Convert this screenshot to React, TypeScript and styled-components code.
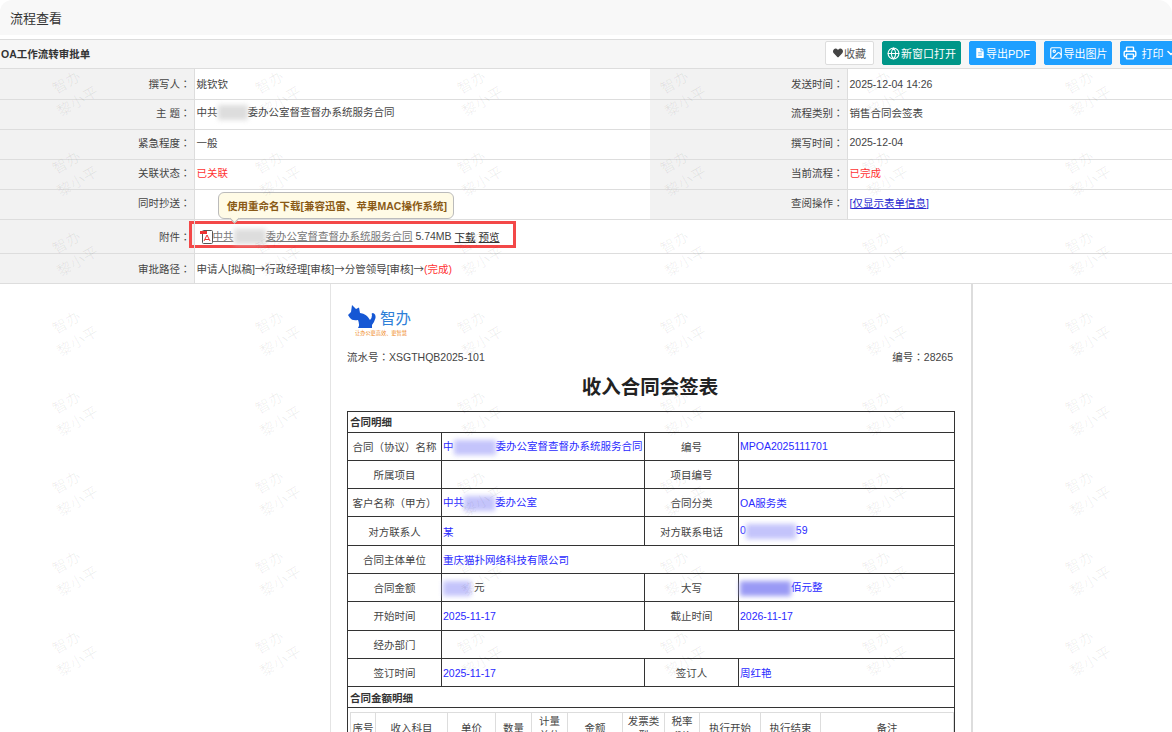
import React from "react";
import styled, { createGlobalStyle } from "styled-components";
import { FaHeart, FaFileAlt } from "react-icons/fa";
import { Globe, Image as ImageIcon, Printer, ChevronDown } from "lucide-react";

const Global = createGlobalStyle`
  html, body { margin: 0; padding: 0; background: #fff; }
  * { box-sizing: border-box; }
  body { font-family: "Liberation Sans", "Noto Sans CJK SC", sans-serif; font-size: 10.5px; color: #444; }
`;

const Frame = styled.div`
  position: relative;
  width: 1172px;
  height: 732px;
  overflow: hidden;
  background: #fff;
`;
const TitleBar = styled.header`
  height: 35px;
  padding-left: 10px;
  display: flex;
  align-items: center;
  background: #f8f8f8;
  border-radius: 12px 14px 0 0;
  font-size: 13px;
  color: #333;
`;
const FormHeader = styled.div`
  height: 30px;
  margin-top: 4px;
  padding: 0 0 2px 1px;
  border-top: 1px solid #dcdcdc;
  border-bottom: 1px solid #ddd;
  display: flex;
  align-items: center;
  background: #f6f6f6;
`;
const FormTitle = styled.h1`
  margin: 0;
  font-size: 10.5px;
  font-weight: 700;
  color: #333;
`;
const Toolbar = styled.div`
  margin-left: auto;
  margin-right: -8px;
  display: flex;
  gap: 8px;
  flex-shrink: 0;
`;
const Btn = styled.button<{ $bg: string; $w: number }>`
  width: ${(p) => p.$w}px;
  height: 24px;
  padding: 0;
  display: flex;
  align-items: center;
  justify-content: center;
  gap: 1px;
  border: 1px solid ${(p) => (p.$bg === "#fff" ? "#ddd" : p.$bg)};
  border-radius: 2px;
  background: ${(p) => p.$bg};
  color: ${(p) => (p.$bg === "#fff" ? "#555" : "#fff")};
  font-family: inherit;
  font-size: 11px;
`;
const InfoTable = styled.table`
  width: 1172px;
  table-layout: fixed;
  border-collapse: collapse;
`;
const InfoRow = styled.tr<{ $h?: number; $lift?: number }>`
  height: ${(p) => p.$h ?? 30}px;
  border-bottom: 1px solid #ddd;
  td {
    padding-bottom: ${(p) => p.$lift ?? 4}px;
  }
`;
const Label = styled.td`
  background: #f2f2f2;
  text-align: right;
  padding: 0 3px 0 0;
  border-right: 1px solid #ddd;
  color: #444;
`;
const Value = styled.td<{ $color?: string }>`
  padding: 0 0 0 2px;
  color: ${(p) => p.$color ?? "#444"};
`;
const Red = styled.span`
  color: #f33;
`;
const Punct = styled.span`
  font-family: "Noto Sans CJK TC", sans-serif;
`;
const Arrow = styled.span`
  font-family: "Noto Sans CJK SC", sans-serif;
`;
const Blur = styled.span<{ $w: number; $c: string }>`
  display: inline-block;
  width: ${(p) => p.$w}px;
  height: 15px;
  vertical-align: middle;
  background: ${(p) => p.$c};
  filter: blur(2.5px);
`;
const Attachment = styled.div`
  width: 327px;
  height: 27px;
  margin: -4px 0 0 -8px;
  padding: 4px 0 0 8px;
  border: 3px solid #f34848;
  display: flex;
  align-items: center;
  white-space: pre;
`;
const FileLink = styled.span`
  color: #777;
  text-decoration: underline;
`;
const ActionLink = styled.span`
  color: #333;
  text-decoration: underline;
  margin-left: 3px;
`;
const Tooltip = styled.div`
  position: absolute;
  left: 218px;
  top: 192px;
  width: 236px;
  height: 27px;
  display: flex;
  align-items: center;
  padding-left: 8px;
  background: #fffbe6;
  border: 1px solid #bbb;
  border-radius: 6px;
  color: #8a5a16;
  font-weight: 700;
  font-size: 10.5px;
  &::after {
    content: "";
    position: absolute;
    left: 12px;
    bottom: -4px;
    width: 6px;
    height: 6px;
    background: #fffbe6;
    border-right: 1px solid #bbb;
    border-bottom: 1px solid #bbb;
    transform: rotate(45deg);
  }
`;
const DocArea = styled.div`
  padding-left: 330px;
`;
const Paper = styled.section`
  width: 643px;
  height: 460px;
  padding: 21px 18px 0 16px;
  border-left: 1px solid #e4e4e4;
  border-right: 2px solid #ddd;
`;
const LogoWrap = styled.div`
  height: 32px;
  display: flex;
  gap: 3px;
`;
const LogoText = styled.div`
  display: flex;
  flex-direction: column;
  padding-top: 4px;
  color: #2f7fd8;
  font-size: 15.5px;
  line-height: 20px;
`;
const Tagline = styled.div`
  margin: 1px 0 0 -25px;
  width: 60px;
  color: #f08a1d;
  font-size: 5.2px;
  line-height: 7px;
  white-space: nowrap;
`;
const MetaRow = styled.div`
  display: flex;
  justify-content: space-between;
  margin-top: 12px;
  height: 16px;
  line-height: 16px;
  color: #444;
`;
const DocTitle = styled.h2`
  margin: 8px 0 0;
  height: 38px;
  text-align: center;
  font-size: 19.5px;
  line-height: 28px;
  font-weight: 700;
  color: #222;
`;
const DocTable = styled.table`
  width: 607px;
  table-layout: fixed;
  border-collapse: collapse;
  td { border: 1px solid #333; padding: 0; }
`;
const DocRow = styled.tr<{ $h?: number }>`
  height: ${(p) => p.$h ?? 28.3}px;
`;
const Section = styled.td`
  font-weight: 700;
  color: #333;
  padding-left: 2px !important;
`;
const DocLabel = styled.td`
  text-align: center;
  color: #444;
`;
const DocValue = styled.td`
  color: #2a2aff;
  padding-left: 1px !important;
  white-space: nowrap;
`;
const Plain = styled.span`
  color: #444;
`;
const Inner = styled.table`
  width: 603px;
  margin: 4px 0 0 2px;
  table-layout: fixed;
  border-collapse: collapse;
  th {
    border: 1px solid #ddd;
    padding: 0 3px;
    height: 30px;
    font-weight: 400;
    line-height: 14px;
    color: #444;
    font-size: 10.5px;
  }
  th:first-child {
    padding: 0;
  }
`;
const Overlay = styled.div`
  position: absolute;
  left: -29px;
  top: 52px;
  display: grid;
  grid-template-columns: repeat(6, 202.6px);
  grid-auto-rows: 80px;
  pointer-events: none;
`;
const Mark = styled.div`
  display: flex;
  flex-direction: column;
  align-items: center;
  justify-content: center;
  transform: rotate(-30deg);
  font-size: 14.5px;
  line-height: 22px;
  letter-spacing: 0.5px;
  color: rgba(0, 0, 0, 0.065);
`;

const Cat = () => (
  <svg width="30" height="25" viewBox="0 0 30 25">
    <path
      fill="#1557d4"
      d="M1 10 L4 7 L5 0 L9 4 L12 2.5 L13 8 Q20 9 23 15 Q25 13 25 10 Q24 8 26 8 Q29 9 28.5 13 Q27 18 25 20 L25 23 L11 23 Q13 20 11 15 Q5 16 3 13 Z"
    />
  </svg>
);

const PdfIcon = () => (
  <svg width="13" height="15" viewBox="0 0 13 15" style={{ flexShrink: 0 }}>
    <rect x="2.5" y="1.5" width="10" height="13" rx="1" fill="#fff" stroke="#555" />
    <path d="M0 2 H7 V5 H0 Z" fill="#e33" />
    <path d="M4 12 L7 6 L10 12 M5 10.5 H9" fill="none" stroke="#e33" strokeWidth="1" />
  </svg>
);

const heads: [string, number][] = [
  ["序号", 25], ["收入科目", 72], ["单价", 48], ["数量", 36], ["计量单位", 36], ["金额", 55],
  ["发票类型", 42], ["税率(%)", 35], ["执行开始", 61], ["执行结束", 60], ["备注", 133],
];

const blue = "#c4c4fb";
const Colon = () => <Punct>：</Punct>;

export default function App() {
  return (
    <Frame>
      <Global />
      <TitleBar>流程查看</TitleBar>
      <FormHeader>
        <FormTitle>OA工作流转审批单</FormTitle>
        <Toolbar>
          <Btn $bg="#fff" $w={49}><FaHeart size={10} color="#444" />收藏</Btn>
          <Btn $bg="#009688" $w={79}><Globe size={13} />新窗口打开</Btn>
          <Btn $bg="#1e9fff" $w={67}><FaFileAlt size={10} />导出PDF</Btn>
          <Btn $bg="#1e9fff" $w={68}><ImageIcon size={14} />导出图片</Btn>
          <Btn $bg="#1e9fff" $w={60}><Printer size={14} strokeWidth={2.4} />&nbsp;打印<ChevronDown size={12} strokeWidth={3} /></Btn>
        </Toolbar>
      </FormHeader>
      <InfoTable>
        <colgroup>
          <col width={194} />
          <col width={456} />
          <col width={197} />
          <col />
        </colgroup>
        <tbody>
          <InfoRow $lift={0}>
            <Label>撰写人<Colon /></Label><Value>姚钦钦</Value>
            <Label>发送时间<Colon /></Label><Value>2025-12-04 14:26</Value>
          </InfoRow>
          <InfoRow>
            <Label>主 题<Colon /></Label><Value>中共<Blur $w={30} $c="#ddd" />委办公室督查督办系统服务合同</Value>
            <Label>流程类别<Colon /></Label><Value>销售合同会签表</Value>
          </InfoRow>
          <InfoRow>
            <Label>紧急程度<Colon /></Label><Value>一般</Value>
            <Label>撰写时间<Colon /></Label><Value>2025-12-04</Value>
          </InfoRow>
          <InfoRow>
            <Label>关联状态<Colon /></Label><Value $color="#f33">已关联</Value>
            <Label>当前流程<Colon /></Label><Value $color="#f33">已完成</Value>
          </InfoRow>
          <InfoRow>
            <Label>同时抄送<Colon /></Label><Value />
            <Label>查阅操作<Colon /></Label><Value $color="#2a2ad0"><u>[仅显示表单信息]</u></Value>
          </InfoRow>
          <InfoRow $h={34} $lift={0}>
            <Label>附件<Colon /></Label>
            <Value colSpan={3}>
              <Attachment>
                <PdfIcon />
                <FileLink>中共<Blur $w={32} $c="#ddd" />委办公室督查督办系统服务合同</FileLink>
                {" 5.74MB"}
                <ActionLink>下载</ActionLink>
                <ActionLink>预览</ActionLink>
              </Attachment>
            </Value>
          </InfoRow>
          <InfoRow $lift={0}>
            <Label>审批路径<Colon /></Label>
            <Value colSpan={3}>申请人[拟稿]<Arrow>→</Arrow>行政经理[审核]<Arrow>→</Arrow>分管领导[审核]<Arrow>→</Arrow><Red>(完成)</Red></Value>
          </InfoRow>
        </tbody>
      </InfoTable>
      <Tooltip>使用重命名下载[兼容迅雷、苹果MAC操作系统]</Tooltip>
      <DocArea>
        <Paper>
          <LogoWrap>
            <Cat />
            <LogoText>
              智办
              <Tagline>让办公更高效、更智慧</Tagline>
            </LogoText>
          </LogoWrap>
          <MetaRow>
            <span>流水号<Colon />XSGTHQB2025-101</span>
            <span>编号<Colon />28265</span>
          </MetaRow>
          <DocTitle>收入合同会签表</DocTitle>
          <DocTable>
            <colgroup>
              <col width={94} />
              <col width={203} />
              <col width={94} />
              <col width={216} />
            </colgroup>
            <tbody>
              <DocRow $h={21}><Section colSpan={4}>合同明细</Section></DocRow>
              <DocRow>
                <DocLabel>合同<Punct>（</Punct>协议<Punct>）</Punct>名称</DocLabel>
                <DocValue>中<Blur $w={42} $c={blue} />委办公室督查督办系统服务合同</DocValue>
                <DocLabel>编号</DocLabel>
                <DocValue>MPOA2025111701</DocValue>
              </DocRow>
              <DocRow>
                <DocLabel>所属项目</DocLabel><DocValue />
                <DocLabel>项目编号</DocLabel><DocValue />
              </DocRow>
              <DocRow>
                <DocLabel>客户名称<Punct>（</Punct>甲方<Punct>）</Punct></DocLabel>
                <DocValue>中共<Blur $w={31} $c={blue} />委办公室</DocValue>
                <DocLabel>合同分类</DocLabel>
                <DocValue>OA服务类</DocValue>
              </DocRow>
              <DocRow>
                <DocLabel>对方联系人</DocLabel><DocValue>某</DocValue>
                <DocLabel>对方联系电话</DocLabel>
                <DocValue>0<Blur $w={50} $c={blue} />59</DocValue>
              </DocRow>
              <DocRow>
                <DocLabel>合同主体单位</DocLabel>
                <DocValue colSpan={3}>重庆猫扑网络科技有限公司</DocValue>
              </DocRow>
              <DocRow>
                <DocLabel>合同金额</DocLabel>
                <DocValue><Blur $w={28} $c={blue} /> <Plain>元</Plain></DocValue>
                <DocLabel>大写</DocLabel>
                <DocValue><Blur $w={51} $c="#9a9af5" />佰元整</DocValue>
              </DocRow>
              <DocRow>
                <DocLabel>开始时间</DocLabel><DocValue>2025-11-17</DocValue>
                <DocLabel>截止时间</DocLabel><DocValue>2026-11-17</DocValue>
              </DocRow>
              <DocRow>
                <DocLabel>经办部门</DocLabel><DocValue colSpan={3} />
              </DocRow>
              <DocRow>
                <DocLabel>签订时间</DocLabel><DocValue>2025-11-17</DocValue>
                <DocLabel>签订人</DocLabel><DocValue>周红艳</DocValue>
              </DocRow>
              <DocRow $h={21}><Section colSpan={4}>合同金额明细</Section></DocRow>
              <DocRow>
                <td colSpan={4}>
                  <Inner>
                    <colgroup>
                      {heads.map(([, w], i) => <col key={i} width={w} />)}
                    </colgroup>
                    <thead>
                      <tr>{heads.map(([t], i) => <th key={i}>{t}</th>)}</tr>
                    </thead>
                  </Inner>
                </td>
              </DocRow>
            </tbody>
          </DocTable>
        </Paper>
      </DocArea>
      <Overlay>
        {Array.from({ length: 48 }).map((_, i) => (
          <Mark key={i}><span>智办</span><span>黎小平</span></Mark>
        ))}
      </Overlay>
    </Frame>
  );
}
